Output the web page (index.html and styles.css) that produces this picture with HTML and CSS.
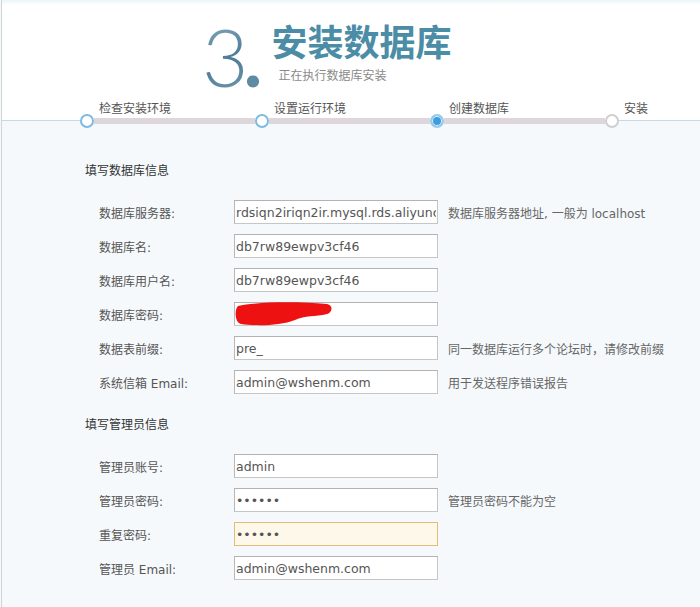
FILE: index.html
```html
<!DOCTYPE html>
<html lang="zh-CN">
<head>
<meta charset="utf-8">
<title>安装数据库</title>
<link rel="stylesheet" href="styles.css">
</head>
<body>
<div class="page">
  <header class="hero">
    <div class="title">
      <span class="num"><span class="num-3">3</span><span class="num-dot">.</span></span>
      <div class="title-text">
        <h1>安装数据库</h1>
        <p>正在执行数据库安装</p>
      </div>
    </div>
    <ol class="steps">
      <li class="step done">
        <span class="step-label">检查安装环境</span>
        <span class="track"><i class="dot"></i><b class="bar"></b></span>
      </li>
      <li class="step done">
        <span class="step-label">设置运行环境</span>
        <span class="track"><i class="dot"></i><b class="bar"></b></span>
      </li>
      <li class="step current">
        <span class="step-label">创建数据库</span>
        <span class="track"><i class="dot"></i><b class="bar"></b></span>
      </li>
      <li class="step todo">
        <span class="step-label">安装</span>
        <span class="track"><i class="dot"></i></span>
      </li>
    </ol>
  </header>

  <main class="form">
    <section class="group">
      <h2>填写数据库信息</h2>
      <div class="row">
        <label>数据库服务器:</label>
        <input type="text" value="rdsiqn2iriqn2ir.mysql.rds.aliyuncs.com">
        <span class="tip">数据库服务器地址, 一般为 localhost</span>
      </div>
      <div class="row">
        <label>数据库名:</label>
        <input type="text" value="db7rw89ewpv3cf46">
        <span class="tip"></span>
      </div>
      <div class="row">
        <label>数据库用户名:</label>
        <input type="text" value="db7rw89ewpv3cf46">
        <span class="tip"></span>
      </div>
      <div class="row">
        <label>数据库密码:</label>
        <span class="masked">
          <input type="text" value="">
          <svg class="scribble" width="100" height="26" viewBox="0 0 100 26" aria-hidden="true">
            <path d="M3 5 C 20 1, 60 0, 92 3 C 98 4, 98 11, 92 13 C 80 16, 70 14, 60 19 C 45 25, 20 25, 6 23 C 0 22, -1 9, 3 5 Z" fill="#ee1111"/>
          </svg>
        </span>
        <span class="tip"></span>
      </div>
      <div class="row">
        <label>数据表前缀:</label>
        <input type="text" value="pre_">
        <span class="tip">同一数据库运行多个论坛时，请修改前缀</span>
      </div>
      <div class="row">
        <label>系统信箱 Email:</label>
        <input type="text" value="admin@wshenm.com">
        <span class="tip">用于发送程序错误报告</span>
      </div>
    </section>

    <section class="group">
      <h2>填写管理员信息</h2>
      <div class="row">
        <label>管理员账号:</label>
        <input type="text" value="admin">
        <span class="tip"></span>
      </div>
      <div class="row">
        <label>管理员密码:</label>
        <input type="password" value="123456">
        <span class="tip">管理员密码不能为空</span>
      </div>
      <div class="row">
        <label>重复密码:</label>
        <input type="password" class="focus" value="123456">
        <span class="tip"></span>
      </div>
      <div class="row">
        <label>管理员 Email:</label>
        <input type="text" value="admin@wshenm.com">
        <span class="tip"></span>
      </div>
    </section>
  </main>
</div>
</body>
</html>
```
FILE: styles.css
```css
html, body {
  margin: 0;
  padding: 0;
  height: 100%;
}
body {
  background: #f5f9fc;
  font-family: "DejaVu Sans", "Noto Sans CJK SC", sans-serif;
  font-size: 12px;
  color: #555;
}
.page {
  margin-left: 1px;
  border-left: 1px solid #cfd4d8;
  min-height: 100%;
  box-sizing: border-box;
}

/* header */
.hero {
  height: 121px;
  box-sizing: border-box;
  border-bottom: 1px solid #c6d8e4;
  background: linear-gradient(#eaf6f6 0, #ffffff 5px, #ffffff 100%);
  display: flex;
  flex-direction: column;
}
.title {
  display: flex;
  align-items: flex-start;
  padding-left: 200px;
  margin-top: 16px;
  height: 80px;
}
.num {
  display: flex;
  font-family: Lato, "Open Sans", Roboto, sans-serif;
  font-weight: 300;
  font-size: 80px;
  line-height: 80px;
}
.num-3,
.num-dot {
  color: #5f8aa3;
  background: linear-gradient(160deg, #8db1c4 0%, #4d7c97 55%, #6f98ad 100%);
  -webkit-background-clip: text;
  background-clip: text;
  -webkit-text-fill-color: transparent;
}
.num-3 {
  letter-spacing: -5px;
}
.num-dot {
  font-weight: 700;
  color: #5f8aa3;
  background: #5f8aa3;
  -webkit-background-clip: text;
  background-clip: text;
}
.title-text {
  margin-left: 9px;
  padding-top: 6px;
}
.title-text h1 {
  margin: 0;
  font-family: "Noto Sans CJK SC", sans-serif;
  font-size: 36px;
  line-height: 36px;
  font-weight: 700;
  color: #4b8ca6;
}
.title-text p {
  margin: 9px 0 0 7px;
  font-family: "Noto Sans CJK SC", sans-serif;
  font-size: 12px;
  line-height: 16px;
  color: #8a8a8a;
}

.steps {
  list-style: none;
  margin: 5px 0 0 78px;
  padding: 0;
  display: flex;
  position: relative;
  z-index: 1;
}
.step {
  flex: none;
  width: 175px;
  display: flex;
  flex-direction: column;
}
.step.todo {
  width: 80px;
}
.step-label {
  padding-left: 19px;
  font-family: "Noto Sans CJK SC", sans-serif;
  font-size: 12px;
  line-height: 14px;
  color: #555;
}
.track {
  display: flex;
  align-items: center;
  height: 14px;
  margin-top: -1px;
}
.dot {
  width: 14px;
  height: 14px;
  box-sizing: border-box;
  border-radius: 50%;
  border: 2px solid #7dbbe2;
  background: #fff;
  flex: none;
}
.current .dot {
  border-color: #9ccbe9;
  background: #3d9ddf;
  box-shadow: inset 0 0 0 1px #e8f3fb;
}
.todo .dot {
  border-color: #cfcfcf;
}
.bar {
  flex: 1;
  height: 6px;
  background: #ddd7db;
}

/* form */
.form {
  padding: 39px 0 20px 83px;
}
.group h2 {
  margin: 0 0 15px;
  font-family: "Noto Sans CJK SC", sans-serif;
  font-size: 12px;
  line-height: 20px;
  font-weight: 400;
  color: #333;
}
.group + .group {
  margin-top: 15px;
}
.row {
  display: grid;
  grid-template-columns: 125px 204px auto;
  column-gap: 10px;
  align-items: center;
  height: 34px;
  padding-left: 14px;
}
.row label {
  color: #555;
  font-size: 12px;
}
.row input {
  width: 204px;
  height: 24px;
  box-sizing: border-box;
  margin: 0;
  padding: 0 1px;
  border: 1px solid #c6c6c6;
  border-top-color: #b3b3b3;
  border-left-color: #b8b8b8;
  background: #fff;
  font-family: "DejaVu Sans", sans-serif;
  font-size: 12.5px;
  color: #555;
  outline: none;
}
.row input.focus {
  border-color: #e1bd7d;
  background: #fdf8ea;
}
.tip {
  color: #666;
  font-size: 12px;
  white-space: nowrap;
}
.masked {
  position: relative;
  display: block;
  width: 204px;
  height: 24px;
}
.scribble {
  position: absolute;
  left: 1px;
  top: -1px;
}
```
